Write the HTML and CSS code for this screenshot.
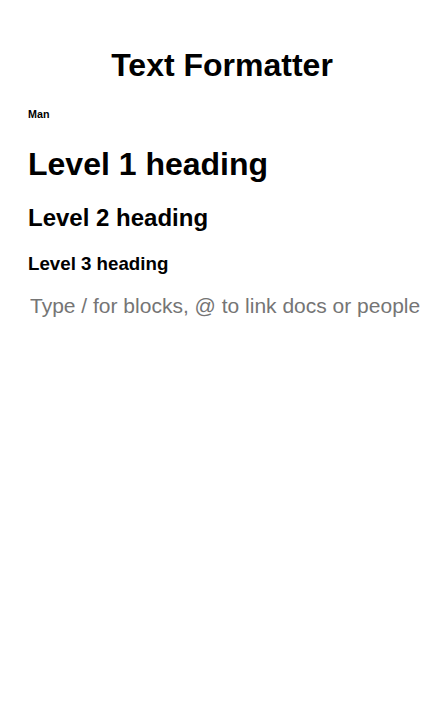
FILE: index.html
```html
<!DOCTYPE html>
<html lang="en">
<head>
<meta charset="utf-8">
<meta name="viewport" content="width=device-width, initial-scale=1">
<title>Text Formatter</title>
<link rel="stylesheet" href="styles.css">
</head>
<body>
<main class="editor">
<header class="editor-header">
<h1 class="title">Text Formatter</h1>
</header>
<h6>Man</h6>
<h1 class="level-1">Level 1 heading</h1>
<h2 class="level-2">Level 2 heading</h2>
<h3>Level 3 heading</h3>
<input class="block-input" type="text" aria-label="New block" placeholder="Type / for blocks, @ to link docs or people">
</main>
</body>
</html>
```

FILE: styles.css
```css
body {
  margin: 8px;
  background: #fff;
  color: #000;
  font-family: "Liberation Sans", Arial, sans-serif;
}

.editor {
  padding: 18px 0 20px 20px;
}

.editor-header {
  padding-right: 6px;
}

.title,
.level-1,
.level-2 {
  margin: 21px 0;
}

.title,
.level-1 {
  font-size: 32px;
}

.title {
  line-height: 36px;
  text-align: center;
}

.level-1 {
  line-height: 38px;
}

.level-2 {
  font-size: 24px;
  line-height: 28px;
}

.block-input {
  display: block;
  box-sizing: border-box;
  width: 100%;
  height: 24px;
  padding: 0 0 0 2px;
  border: 0;
  outline: 0;
  background: transparent;
  font-family: inherit;
  font-size: 21px;
}

.block-input::placeholder {
  color: #757575;
}
```
